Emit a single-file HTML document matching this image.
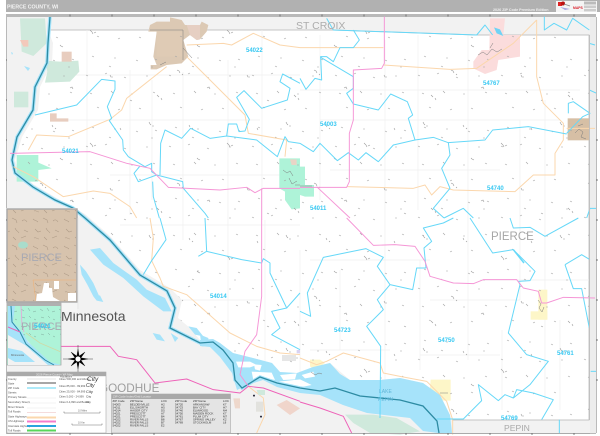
<!DOCTYPE html>
<html><head><meta charset="utf-8"><title>Pierce County, WI</title>
<style>html,body{margin:0;padding:0;background:#fff;width:600px;height:436px;overflow:hidden}svg{display:block;font-family:"Liberation Sans",sans-serif}</style></head>
<body>
<svg width="600" height="436" viewBox="0 0 600 436" xmlns="http://www.w3.org/2000/svg">
<defs>
<clipPath id="county"><path d="M48 30L333 30L477 35L589 35L589 420L452 420L450 415L440 395L423 383L400 378L380 380L350 380L330 363L313 367L297 373L280 372L272 363L253 358L233 353L220 343L213 339L200 340L190 328L178 318L182 300L170 288L140 270L110 236L85 214L65 203L33 184L18 170L15 160L22 137L38 110L40 87L52 63L53 43Z"/></clipPath>
<pattern id="specks" width="83" height="71" patternUnits="userSpaceOnUse">
<path d="M3 4l2 1M22 3l2-1M41 6l2 1M63 5l2 0M7 22l2 1M28 20l2 2M48 23l2 0M70 21l2 1M14 36l2 1M35 39l2-1M56 37l2 1M9 56l2 1M31 58l2 0M53 60l2 1M72 59l2 1M26 66l2 1M68 67l2 0" stroke="#a4a4a4" stroke-width=".6" fill="none"/>
</pattern>
<pattern id="specks2" width="137" height="113" patternUnits="userSpaceOnUse">
<path d="M12 9l1 2 1 1M15 13l2 0M52 12l1 2M55 15l1 1M90 30l2 2 1 2M94 33l2-1M120 15l1 2M40 70l2 1 1 2M45 74l1 1M70 88l2-1 1 2M110 75l1 2 2 0M20 95l2 2M24 98l1 2M130 100l2 1M60 45l1 1 2 1" stroke="#999" stroke-width=".6" fill="none"/>
</pattern>
<pattern id="streets" width="31" height="27" patternUnits="userSpaceOnUse">
<path d="M2 3c2 2 3 1 5 3M12 2l4 2 1 3M22 5c2-2 4-1 5 1M4 13l3 3 3-1M15 12c1 3 3 3 4 5M24 14l4 2M3 22c2-1 3 1 5 1M13 21l3 3M21 22l5-2" stroke="#ad9a86" stroke-width=".55" fill="none"/>
</pattern>
<pattern id="streets2" width="19" height="17" patternUnits="userSpaceOnUse">
<path d="M2 3l3 2M9 2l2 3M14 6l3-1M3 11l3 1M10 10l2 2M15 13l2 1" stroke="#7fa99b" stroke-width=".5" fill="none"/>
</pattern>
</defs>

<!-- header -->
<rect x="6" y="0" width="594" height="12" fill="#b1b1b1"/>
<rect x="556" y="1" width="41" height="11" fill="#f4f4f4"/>
<text x="7" y="8.5" font-size="5.2" font-weight="bold" fill="#f2f2f2">PIERCE COUNTY, WI</text>
<text x="493" y="11" font-size="3.7" font-weight="bold" fill="#eee">2026 ZIP Code Premium Edition</text>
<g>
<rect x="558" y="2" width="4" height="4" fill="#d22"/><circle cx="563" cy="3.5" r="2" fill="#b11"/>
<path d="M560 7l10 2 -5 1z" fill="#a9a6e0"/><path d="M564 4l6 2" stroke="#888" stroke-width=".8"/>
<text x="573" y="8.8" font-size="3.4" font-weight="bold" fill="#d81e2a">MAPS</text>
<rect x="584" y="1.5" width="12" height="3" fill="#bbb"/><rect x="584" y="5.5" width="12" height="2.6" fill="#ccc"/><rect x="584" y="9" width="12" height="2.4" fill="#ccc"/>
</g>

<!-- map background -->
<rect x="6" y="14" width="590" height="420" fill="#b9b9b9"/>
<rect x="7" y="17" width="589" height="416" fill="#f2f2f2"/>
<rect x="590" y="17" width="6" height="416" fill="#ededed"/>
<path d="M48 30L333 30L477 35L589 35L589 420L452 420L450 415L440 395L423 383L400 378L380 380L350 380L330 363L313 367L297 373L280 372L272 363L253 358L233 353L220 343L213 339L200 340L190 328L178 318L182 300L170 288L140 270L110 236L85 214L65 203L33 184L18 170L15 160L22 137L38 110L40 87L52 63L53 43Z" fill="#fff"/>
<path d="M48 30L333 30L477 35L589 35L589 420L452 420" fill="none" stroke="#c4c4c4" stroke-width=".9"/>

<!-- faint roads -->
<g clip-path="url(#county)" fill="none" stroke="#efefef" stroke-width=".7">
<path d="M87 30V200M130 70V215M152 80V200M183 72V240M228 60V340M262 30V220M320 35V200M385 40V420M418 35V210M468 35V360M520 120V300M545 100V400M265 220V390M300 250V380M340 270V350M420 260V370M502 330V410M560 320V410"/>
<path d="M48 75H300M60 120H260M110 175H300M300 90H580M320 120H560M330 170H500M120 225H300M310 260H430M430 300H520M310 350H390M420 355H500M480 280H589M160 300H260"/>
</g>

<!-- parks, cities -->
<g transform="scale(.33333)">
<path d="M60 55H135L140 130L100 168L65 155Z" fill="#cfe9dc"/>
<path d="M135 182L180 185L235 182L238 215L210 245L135 248L142 215Z" fill="#cfe9dc"/>
<path d="M60 120H85V140H70Z" fill="#f3c9bb"/>
<path d="M42 275H85V322H42Z" fill="#cfe9dc"/>
<path d="M185 155H215V185H185Z" fill="#e8cdbf"/>
<path d="M150 340H170V355H205V365H150Z" fill="#e8cdbf"/>
<path d="M470 65H510V52L545 60L555 75H600L605 65L625 75L620 95L600 118L590 120L570 105L550 120L565 170L545 190L500 195L470 208H452V195H470L460 170L470 95H445L450 75Z" fill="#dcc9b4"/>
<rect x="470" y="95" width="78" height="75" fill="#dfcbb5"/>
<path d="M560 75H600V118L590 120L570 105Z" fill="#e6cfc3"/>
<path d="M50 465H115L115 488L155 505L115 510V545H50Z" fill="#aef3d8"/>
<path d="M838 475H900V625L875 628L855 600V575L838 565Z" fill="#aef3d8"/>
<path d="M870 478H890V495H875Z" fill="#e8d5c6"/>
</g>
<g transform="translate(300 0) scale(.33333)">
<path d="M0 500H15V555H42V590H15L0 585Z" fill="#aef3d8"/>
<path d="M570 55H615L610 105H660V170L595 180L590 210L555 222L520 205V185L545 150H568Z" fill="#fbdcdc"/>
<path d="M582 82L600 88L610 108L590 100Z" fill="#6fd3f5"/>
<rect x="803" y="355" width="65" height="66" fill="#d6bfa5"/>
</g>
<g transform="translate(300 218) scale(.33333)">
<rect x="715" y="215" width="27" height="90" fill="#fdf6c8"/>
<rect x="692" y="280" width="50" height="25" fill="#fdf6c8"/>
<path d="M392 485H452V548H430L390 510Z" fill="#fdf6c8"/>
<path d="M30 425H60L75 435L45 455L30 445Z" fill="#fdf6c8"/>
<path d="M135 590H220L290 600L360 640L300 650L210 645L160 615Z" fill="#cfe9dc"/>
</g>

<!-- specks -->
<rect x="7" y="17" width="583" height="415" fill="url(#specks)" clip-path="url(#county)"/>
<rect x="7" y="17" width="583" height="415" fill="url(#specks2)" clip-path="url(#county)"/>

<!-- water -->
<g fill="#a6e3fa">
<path d="M330 363L340 374L350 380L380 380L400 378L423 383L440 395L450 415L452 433H438L423 431L410 418L367 413L343 405L320 395L300 393L277 387L263 380L247 385L237 390L232 373L220 357L210 347L200 346V340L213 339L220 343L233 353L253 358L272 363L280 372L297 373L313 367Z"/>
<g transform="translate(0 218) scale(.33333)">
<path d="M270 95L300 90L340 135L410 185L440 215L495 240L515 280L490 280L430 235L370 180L310 140Z"/>
<path d="M240 140L258 160L280 195L300 240L280 235L262 200L245 170Z"/>
<path d="M280 235L300 232L310 252L290 248Z"/>
<path d="M458 345L480 350L495 370L470 365Z"/>
<path d="M512 345L535 360L525 372Z"/>
<path d="M565 325L590 330L610 355L585 350Z"/>
<path d="M600 350L625 360L625 385L605 385Z"/>
</g>
<path d="M11 52L13 53L12 55Z"/><path d="M24 66L30 68L28 71Z"/>
</g>
<!-- river islands -->
<g transform="translate(200 330) scale(.33333)" fill="#fff">
<path d="M108 95L150 95L170 105L150 112L115 112Z"/>
<path d="M155 125L215 128L225 150L190 143L160 150Z"/>
<path d="M162 103L185 105L180 122L165 118Z"/>
<path d="M240 135L290 130L285 148L250 150Z"/>
<path d="M236 155L300 148L335 165L300 172L240 165Z"/>
<path d="M305 135L340 125L345 140L315 145Z"/>
</g>
<path d="M50 17L48 43L47 63L35 87L33 110L17 137L12 160L15 173L33 187L55 200L73 208L85 218L110 240L140 275L167 291L175 308L170 328L200 343L213 342L223 350L233 363L235 380L242 388L260 377L277 383L300 388L320 391L335 388L360 396L400 400L423 406L437 421L439 433" fill="none" stroke="#a6e3fa" stroke-width="3.5"/>
<path d="M50 17L48 43L47 63L35 87L33 110L17 137L12 160L15 173L33 187L55 200L73 208L85 218L110 240L140 275L167 291L175 308L170 328L200 343L213 342L223 350L233 363L235 380L242 388L260 377L277 383L300 388L320 391L335 388L360 396L400 400L423 406L437 421L439 433" fill="none" stroke="#2d8ba3" stroke-width="1.3"/>

<!-- orange highways -->
<g fill="none" stroke="#fbd7ad" stroke-width="3" stroke-linejoin="round">
<g transform="scale(.33333)">
<path d="M560 135L670 130L695 135L760 100L840 135L900 143"/>
<path d="M560 170L620 230L735 345L745 400L860 420L855 470"/>
<path d="M500 200L380 295L365 330L330 358L205 410L110 405L85 450"/>
<path d="M40 500L100 530L190 590L280 573L330 580L390 620L410 654"/>
</g>
<g transform="translate(0 218) scale(.33333)">
<path d="M450 0L460 60L455 128L480 180L490 205L560 230L690 345L770 385L840 405L900 410"/>
<path d="M745 505L790 540L795 590L770 645"/>
</g>
<g transform="translate(300 0) scale(.33333)">
<path d="M0 143H250M250 195L450 208L530 205L640 130L710 60"/>
<path d="M710 60V230L730 310L790 370V420L765 460V525H700L645 575L460 570L420 560L395 585L375 555L340 565L140 560"/>
<path d="M800 385H885"/>
</g>
<g transform="translate(300 218) scale(.33333)">
<path d="M0 420L50 440L80 430L130 405L240 435L250 465L300 475L380 490L440 550L458 605V650"/>
</g>
</g>

<!-- cyan ZIP lines -->
<g fill="none" stroke="#66d8f8" stroke-width="3" stroke-linejoin="round">
<g transform="scale(.33333)">
<path d="M105 345L230 315L305 238L345 243V268L322 320L335 355L328 362L368 420L370 450L385 470L435 500L455 490V515L470 525L415 545L402 520L420 498"/>
<path d="M470 525L548 545L550 565L615 640L625 654"/>
<path d="M480 525L482 430L495 390L545 415L572 385L630 415L680 408L770 420L832 470L855 410L865 425L900 430"/>
<path d="M458 545L460 590L478 654"/>
<path d="M680 408L685 372H710L717 395L735 393L748 358L710 292L732 272L785 325L862 300L870 265L840 245L848 222L900 250"/>
</g>
<g transform="translate(300 0) scale(.33333)">
<path d="M80 55L100 90L530 105L555 75L578 105"/>
<path d="M160 90L178 120L160 143H120L100 185L80 170H62V172L160 230V265L140 280L160 312L235 330L272 282L322 305L338 345L325 355L345 420L280 435L235 485L198 458L175 480L145 458L112 482L60 430L40 455L0 430"/>
<path d="M0 235L18 268L45 235L65 240L62 170"/>
<path d="M345 420L400 412L445 428L555 420L578 390L685 380L800 402"/>
<path d="M445 428L450 465L425 505L450 565L400 625L432 654"/>
<path d="M432 654L490 625L520 654"/>
<path d="M733 50V90L762 70L800 90L818 55L868 90"/>
<path d="M868 130L885 135M868 270L890 280"/>
<path d="M805 340V310L820 305L870 340L848 350L800 400"/>
<path d="M860 654L870 625H888"/>
</g>
<g transform="translate(300 218) scale(.33333)">
<path d="M510 0L578 105L640 95L705 160L690 188L655 190L660 200L625 345L680 410L745 430L690 500L640 540L650 515L700 525L760 545L725 605"/>
<path d="M835 0L735 55L690 28L640 30L630 0"/>
<path d="M640 95L672 135" stroke-width="4.5"/>
<path d="M460 0L430 15L370 30L395 70L372 90L378 150H350L338 215L270 200L232 145L250 118L198 92L70 118L22 225L32 295L0 280"/>
<path d="M270 200L232 245L250 275L200 325L242 385L240 600"/>
<path d="M795 140L845 110L870 125M795 140L820 212H845L868 330"/>
<path d="M410 603H490L545 548L535 500L595 548L615 530L640 540"/>
<path d="M778 605V645"/>
<path d="M872 460H888"/>
</g>
<g transform="translate(0 218) scale(.33333)">
<path d="M480 0L498 65L455 128L430 170"/>
<path d="M615 0L620 100L595 115"/>
<path d="M620 100L725 125L785 135L790 122L810 135V165L860 270L815 280L840 330L815 350L900 395"/>
<path d="M860 270L900 225"/>
</g>
</g>

<!-- pink lines -->
<g fill="none" stroke="#f596d6" stroke-width="2.9" stroke-linejoin="round">
<g transform="scale(.33333)">
<path d="M30 460L270 455L380 490L450 505L505 562L660 570L740 562L765 578L790 565H900"/>
<path d="M785 565V654"/>
</g>
<g transform="translate(300 0) scale(.33333)">
<path d="M0 562H140L148 545V400L160 360V210L245 205L253 190V50"/>
<path d="M50 560L150 654"/>
</g>
<g transform="translate(0 218) scale(.33333)">
<path d="M785 0V235L770 350L735 400L720 470L745 505"/>
<path d="M183 385H330L355 415L410 425L465 495L560 483L640 515L720 525L745 505L790 510L900 550" stroke="#ee62b8"/>
</g>
<g transform="translate(300 218) scale(.33333)">
<path d="M140 0L220 82L285 80L345 85L375 130L390 175L460 195L520 197L550 185H650L670 210L715 220L725 255H740L790 238L885 240"/>
<path d="M0 552L60 570L130 595L155 645" stroke="#ee62b8"/>
</g>
</g>

<!-- city street clusters -->
<g fill="none" stroke="#7c7c7c" stroke-width=".5">
<path d="M150 30H183V60M183 48L192 58M160 65L166 62M283 170l4 3 3-2 3 5M289 178l3 6 5-3M295 185h5M300 186h12M478 55l5-3 4 3 5-6 5 3M490 48l3-5M497 52l5-3M575 133l4-4 4 3-2 5 5 2M578 126l5-2M311 372l4 3 4-2 3 1M538 300l3 4-2 4 3 4 2-5M440 393h8"/>
<path d="M282 356h14M282 358h16M282 360h14" stroke="#999"/>
</g>

<!-- labels -->
<g fill="#a9a9a9">
<text x="296" y="29" font-size="10.5" fill="#adadad">ST CROIX</text>
<text x="491" y="240" font-size="11.5" fill="#a6a6a6">PIERCE</text>
<text x="504" y="431" font-size="8.6" fill="#a9a9a9">PEPIN</text>
<text x="99" y="392" font-size="11.7" fill="#9e9e9e">GOODHUE</text>
</g>
<text x="61" y="321" font-size="14" fill="#555">Minnesota</text>
<g font-size="6" fill="#37c8f2" font-weight="bold">
<text x="246" y="52">54022</text><text x="62" y="153">54021</text><text x="320" y="126">54003</text>
<text x="310" y="210">54011</text><text x="483" y="85">54767</text><text x="487" y="190">54740</text>
<text x="210" y="298">54014</text><text x="334" y="332">54723</text><text x="438" y="342">54750</text>
<text x="557" y="355">54761</text><text x="501" y="420">54769</text>
</g>
<text x="379" y="393" font-size="5" fill="#5fb5d8">LAKE</text>
<text x="378" y="401" font-size="5" fill="#5fb5d8">PEPIN</text>

<!-- inset 1 -->
<rect x="6" y="208" width="71" height="104" fill="#f5f5f5"/>
<rect x="7" y="209" width="70" height="93" fill="#d7c3ad" stroke="#a8a8a8" stroke-width="1.4"/>
<rect x="8" y="210" width="68" height="91" fill="url(#streets)"/>
<path d="M33 280H76" stroke="#f2b070" stroke-width=".5"/><path d="M33 280L36 301" stroke="#f2b070" stroke-width=".5"/>
<path d="M36 301L37 294L42 293L44 283H49V288H52L53 297L60 301Z" fill="#fff"/>
<rect x="54" y="281" width="5" height="8" fill="#fff"/>
<rect x="68" y="293" width="8" height="8" fill="#fff"/>
<ellipse cx="23" cy="245" rx="5" ry="3.5" fill="#a9dccb"/>
<text x="21" y="261" font-size="11" fill="#a7a9b3">PIERCE</text>
<path d="M78 218V309" stroke="#e8e8e8" stroke-width="1"/>

<!-- inset 2 -->
<rect x="7" y="303" width="54" height="62" fill="#aef3d8" stroke="#a8a8a8" stroke-width=".8"/>
<rect x="8" y="306" width="53" height="35" fill="url(#streets2)"/>
<path d="M8 306H12L13 325L20 332L40 355L50 365H8Z" fill="#f2f2f2"/>
<path d="M8 306H15L13 322L22 332L28 342L50 362L61 365H48L25 345L8 335Z" fill="#a6e3fa"/>
<path d="M8 348L22 351L35 362H15L8 358Z" fill="#a6e3fa"/>
<path d="M11 306L12 322L20 332L26 344L45 360L54 365" fill="none" stroke="#2d8ba3" stroke-width="1"/>
<path d="M21 306L22 325L24 332" fill="none" stroke="#e6a6d8" stroke-width=".8"/>
<path d="M26 333L40 343L61 352" fill="none" stroke="#cfd9a6" stroke-width=".8"/>
<path d="M20 332L8 327" fill="none" stroke="#e46ab8" stroke-width="1"/>
<rect x="7" y="303" width="54" height="3" fill="#b0b0b0"/>
<text x="21" y="330" font-size="11" fill="#a9a9b3">PIERCE</text>
<text x="34" y="328" font-size="6" font-weight="bold" fill="#37c8f2">54021</text>
<text x="11" y="356" font-size="2.8" fill="#666">Minnesota</text>

<!-- compass -->
<g transform="translate(78 359)" fill="#000" stroke="#000" stroke-width=".3">
<path d="M0-10L1.2-3L7-7L3-1.2L10 0L3 1.2L7 7L1.2 3L0 10L-1.2 3L-7 7L-3 1.2L-10 0L-3-1.2L-7-7L-1.2-3Z"/>
<circle r="2.6" fill="#fff" stroke="none"/>
<path d="M-10 0H-15M10 0H15M0-10V-14M0 10V14" stroke="#444" stroke-width=".5"/>
</g>

<!-- legend -->
<rect x="7" y="372" width="99" height="61" fill="#fff" stroke="#a8a8a8" stroke-width=".6"/>
<rect x="7" y="372" width="99" height="4.2" fill="#a9a9a9"/>
<text x="36" y="375.3" font-size="2.9" fill="#eee">2026 Pierce County, WI Map</text>
<g font-size="2.7" fill="#555">
<text x="8" y="380">County</text><text x="8" y="384.5">State</text><text x="8" y="389">ZIP Code</text><text x="8" y="393.5">Streets</text><text x="8" y="398">Primary Streets</text><text x="8" y="403">Secondary Streets</text><text x="8" y="408">Minor Streets</text><text x="8" y="412.5">Toll Roads</text><text x="8" y="417.5">State Highways</text><text x="8" y="422">US Highways</text><text x="8" y="427">Interstate Highways</text><text x="8" y="431.5">Toll Roads</text>
<text x="59" y="380">Cities 500,000 and Above</text><text x="59" y="387">Cities 85,000 - 99,999</text><text x="59" y="392.5">Cities 25,000 - 84,999</text><text x="59" y="397.5">Cities 5,000 - 24,999</text><text x="59" y="403">Cities 0-4,999 and Below</text><text x="60" y="377.7" font-size="2.3">Populations</text>
</g>
<g fill="none">
<path d="M27 379H56" stroke="#ddd" stroke-width=".8"/><path d="M27 383H56" stroke="#8a8a8a" stroke-width="1.6"/><path d="M27 388H56" stroke="#aeeaf9" stroke-width="2"/><path d="M27 398H56M27 403H56M27 408H56" stroke="#f0f0f0" stroke-width=".7"/><path d="M27 412.5H56" stroke="#f5dcdc" stroke-width="1"/><path d="M27 417.5H56" stroke="#fbd7ad" stroke-width="2"/><path d="M27 421.5H56" stroke="#f47ccb" stroke-width="2"/><path d="M27 426H56" stroke="#2aa4dd" stroke-width="2"/><path d="M27 430.5H56" stroke="#57d65a" stroke-width="2"/>
</g>
<g fill="#333">
<text x="87" y="381" font-size="6.5" font-style="italic">City</text><text x="86" y="387" font-size="5" font-style="italic">City</text><text x="86" y="393" font-size="4">City</text><text x="86" y="397.5" font-size="3">City</text><text x="86" y="403" font-size="2.8">City</text>
</g>
<path d="M64 413H100M64 413v-1.5M100 413v-1.5M72 425H102M72 425v-1.5M102 425v-1.5" stroke="#777" stroke-width=".6" fill="none"/>
<text x="78" y="411.5" font-size="2.4" fill="#666">10 Miles</text><text x="78" y="423.5" font-size="2.4" fill="#666">10 Km</text>

<!-- table -->
<rect x="111.5" y="394" width="119" height="39" fill="#e4e4e4" stroke="#a9a9a9" stroke-width=".6"/>
<rect x="111.5" y="394" width="119" height="5" fill="#a9a9a9"/>
<text x="113" y="397.6" font-size="3" fill="#eee">ZIP Code Index/Grid Locator</text>
<g font-size="2.9" fill="#333">
<text x="112.5" y="402">ZIP Code</text><text x="130" y="402">ZIP Name</text><text x="161" y="402">LOC</text><text x="175" y="402">ZIP Code</text><text x="193" y="402">ZIP Name</text><text x="223" y="402">LOC</text>
<text x="112.5" y="405.3">54003</text><text x="130" y="405.3">BELDENVILLE</text><text x="161" y="405.3">H2</text><text x="175" y="405.3">54720</text><text x="193" y="405.3">ARKANSAW</text><text x="223" y="405.3">K7</text>
<text x="112.5" y="408.3">54011</text><text x="130" y="408.3">ELLSWORTH</text><text x="161" y="408.3">H5</text><text x="175" y="408.3">54723</text><text x="193" y="408.3">BAY CITY</text><text x="223" y="408.3">H7</text>
<text x="112.5" y="411.3">54014</text><text x="130" y="411.3">HAGER CITY</text><text x="161" y="411.3">D5</text><text x="175" y="411.3">54740</text><text x="193" y="411.3">ELMWOOD</text><text x="223" y="411.3">M4</text>
<text x="112.5" y="414.3">54021</text><text x="130" y="414.3">PRESCOTT</text><text x="161" y="414.3">A7</text><text x="175" y="414.3">54750</text><text x="193" y="414.3">MAIDEN ROCK</text><text x="223" y="414.3">K7</text>
<text x="112.5" y="417.3">54021</text><text x="130" y="417.3">PRESCOTT</text><text x="161" y="417.3">B4</text><text x="175" y="417.3">54761</text><text x="193" y="417.3">PLUM CITY</text><text x="223" y="417.3">M7</text>
<text x="112.5" y="420.3">54022</text><text x="130" y="420.3">RIVER FALLS</text><text x="161" y="420.3">B8</text><text x="175" y="420.3">54767</text><text x="193" y="420.3">SPRING VALLEY</text><text x="223" y="420.3">K2</text>
<text x="112.5" y="423.3">54022</text><text x="130" y="423.3">RIVER FALLS</text><text x="161" y="423.3">B7</text><text x="175" y="423.3">54769</text><text x="193" y="423.3">STOCKHOLM</text><text x="223" y="423.3">L8</text>
<text x="112.5" y="426.3">54022</text><text x="130" y="426.3">RIVER FALLS</text><text x="161" y="426.3">E2</text>
</g>

<!-- MN south side icons -->
<g transform="translate(200 330) scale(.33333)">
<path d="M100 205H120V235H105Z" fill="#eed8cc"/>
<path d="M168 215H190V245H168Z" fill="#e2e2de"/>
<path d="M170 180H195V195H175Z" fill="#cfe9dc"/>
<path d="M230 225L260 210L300 235L270 255Z" fill="#f0d5cb"/>
<path d="M290 60H300V70H290Z" fill="#d9d2f2"/>
<circle cx="162" cy="197" r="3" fill="#223"/><circle cx="183" cy="260" r="3" fill="#223"/>
</g>

<!-- frame ticks -->
<path d="M7 433.5H590" stroke="#aaa" stroke-width="1"/>
<path d="M596.5 17V433" stroke="#bbb" stroke-width="1"/>
<path d="M589.5 35V420" stroke="#c0c0c0" stroke-width="1"/>
<path d="M70 14.5v2M112 14.5v2M154 14.5v2M196 14.5v2M238 14.5v2M280 14.5v2M322 14.5v2M364 14.5v2M406 14.5v2M448 14.5v2M490 14.5v2M532 14.5v2M574 14.5v2M70 433v2M112 433v2M154 433v2M196 433v2M238 433v2M280 433v2M322 433v2M364 433v2M406 433v2M448 433v2M490 433v2M532 433v2M574 433v2M6 60h1M6 100h1M6 140h1M6 180h1M6 220h1M6 260h1M6 300h1M6 340h1M6 380h1M596 60h2M596 100h2M596 140h2M596 180h2M596 220h2M596 260h2M596 300h2M596 340h2M596 380h2" stroke="#555" stroke-width=".7"/>
</svg>
</body></html>
